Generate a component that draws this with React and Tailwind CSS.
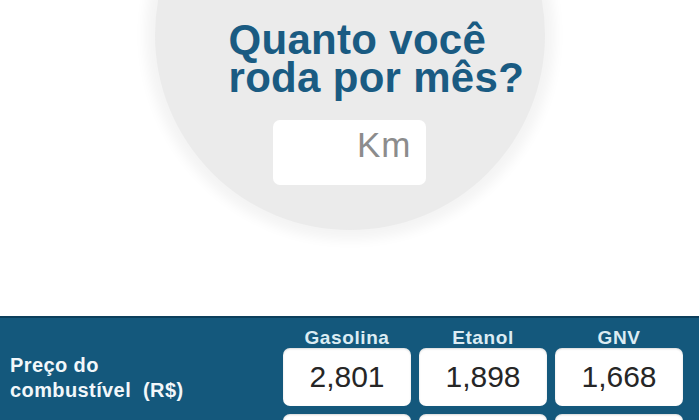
import React from 'react';

const prices = [
  { fuel: 'Gasolina', value: '2,801' },
  { fuel: 'Etanol', value: '1,898' },
  { fuel: 'GNV', value: '1,668' },
];

export default function App() {
  return (
    <div className="w-[699px] h-[420px] overflow-hidden bg-white flex flex-col font-['Liberation_Sans',Arial,sans-serif]">
      {/* Top: circle question */}
      <div className="h-[316px] shrink-0 flex justify-center overflow-hidden">
        <div className="w-[390px] h-[390px] shrink-0 -mt-[160px] rounded-full bg-[#ebebeb] shadow-[0_0_12px_10px_#f4f4f4] flex flex-col items-start pt-[181px] pl-[74px]">
          <h1 className="text-[42px] leading-[38px] font-bold tracking-[0.3px] text-[#1a5b82]">
            Quanto você
            <br />
            roda por mês?
          </h1>
          <div className="mt-[23px] ml-[44px] w-[153px] h-[65px] rounded-[7px] bg-white flex justify-end items-start pt-[7px] pr-[14px]">
            <span className="text-[35px] leading-[35px] tracking-[1px] text-[#8c8c8c]">Km</span>
          </div>
        </div>
      </div>

      {/* Bottom: fuel price panel */}
      <div className="flex-1 bg-[#14587c] border-t-2 border-[#0c3f5c] flex">
        <div className="w-[283px] shrink-0 pt-[35px] pl-[10px]">
          <p className="text-[20px] leading-[25px] font-bold tracking-[0.4px] text-[#f2f7fa]">
            Preço do
            <br />
            combustível{'\u00a0'} (R$)
          </p>
        </div>
        <div className="pt-[10px]">
          <div className="grid grid-cols-[128px_128px_128px] gap-x-[8px]">
            {prices.map((p) => (
              <div key={p.fuel} className="text-center text-[19px] leading-[20px] font-bold tracking-[0.6px] text-[#dcecf3]">
                {p.fuel}
              </div>
            ))}
          </div>
          <div className="grid grid-cols-[128px_128px_128px] gap-x-[8px] gap-y-[8px]">
            {prices.map((p) => (
              <div key={p.fuel} className="h-[58px] rounded-[7px] bg-white shadow-[inset_0_1px_2px_rgba(0,0,0,0.15)] flex items-center justify-center">
                <span className="text-[30px] leading-[30px] text-[#262626]">{p.value}</span>
              </div>
            ))}
            {prices.map((p) => (
              <div key={p.fuel + '-2'} className="h-[58px] rounded-[7px] bg-white shadow-[inset_0_1px_2px_rgba(0,0,0,0.15)]" />
            ))}
          </div>
        </div>
      </div>
    </div>
  );
}
